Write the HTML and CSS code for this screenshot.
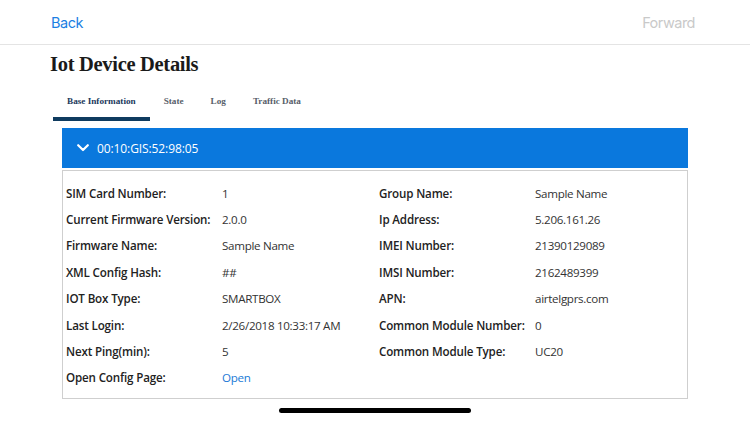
FILE: index.html
```html
<!DOCTYPE html>
<html>
<head>
<meta charset="utf-8">
<link rel="stylesheet" href="styles.css">
</head>
<body>
<div class="nav">
  <span class="back">Back</span>
  <span class="forward">Forward</span>
</div>
<h1 class="title">Iot Device Details</h1>
<div class="tabs">
  <div class="tab active">Base Information</div>
  <div class="tab">State</div>
  <div class="tab">Log</div>
  <div class="tab">Traffic Data</div>
</div>
<div class="panel">
  <div class="panel-head">
    <svg class="chev" width="12" height="8" viewBox="0 0 12 8"><path d="M1.2 1.2 L6 6 L10.8 1.2" fill="none" stroke="#fff" stroke-width="2.2" stroke-linecap="round" stroke-linejoin="round"/></svg>
    <span>00:10:GIS:52:98:05</span>
  </div>
  <div class="panel-body">
    <div class="lbl">SIM Card Number:</div><div class="val">1</div>
    <div class="lbl">Group Name:</div><div class="val">Sample Name</div>
    <div class="lbl">Current Firmware Version:</div><div class="val">2.0.0</div>
    <div class="lbl">Ip Address:</div><div class="val">5.206.161.26</div>
    <div class="lbl">Firmware Name:</div><div class="val">Sample Name</div>
    <div class="lbl">IMEI Number:</div><div class="val">21390129089</div>
    <div class="lbl">XML Config Hash:</div><div class="val">##</div>
    <div class="lbl">IMSI Number:</div><div class="val">2162489399</div>
    <div class="lbl">IOT Box Type:</div><div class="val">SMARTBOX</div>
    <div class="lbl">APN:</div><div class="val">airtelgprs.com</div>
    <div class="lbl">Last Login:</div><div class="val">2/26/2018 10:33:17 AM</div>
    <div class="lbl">Common Module Number:</div><div class="val">0</div>
    <div class="lbl">Next Ping(min):</div><div class="val">5</div>
    <div class="lbl">Common Module Type:</div><div class="val">UC20</div>
    <div class="lbl">Open Config Page:</div><div class="val link">Open</div>
    <div class="lbl"></div><div class="val"></div>
  </div>
</div>
<div class="home-bar"></div>
</body>
</html>
```
FILE: styles.css
```css
html, body {
  margin: 0;
  padding: 0;
  background: #fff;
  width: 750px;
  height: 422px;
  overflow: hidden;
  position: relative;
}
.nav {
  height: 44px;
  border-bottom: 1px solid #e4e4e4;
  display: flex;
  justify-content: space-between;
  align-items: center;
  padding: 0 55px 0 51px;
  font-family: Inter, "Liberation Sans", sans-serif;
  font-size: 14.5px;
  letter-spacing: -0.5px;
}
.back { color: #1b7fe3; }
.forward { color: #c9c9c9; }
.title {
  margin: 5px 0 0 50px;
  font-family: "Liberation Serif", serif;
  font-weight: bold;
  font-size: 20.5px;
  letter-spacing: -0.3px;
  line-height: 28px;
  color: #1a1a1a;
}
.tabs {
  display: flex;
  margin: 10px 0 0 53px;
  font-family: "Liberation Serif", serif;
  font-weight: bold;
  font-size: 9.2px;
}
.tab {
  padding: 8px 13px 11px 14px;
  color: #58606a;
  border-bottom: 4px solid transparent;
}
.tab.active {
  padding-right: 14px;
  color: #1c3a5c;
  border-bottom-color: #0f3b5f;
}
.panel {
  margin: 7px 0 0 62px;
  width: 626px;
  font-family: "Open Sans", sans-serif;
}
.panel-head {
  height: 40px;
  background: #0a78dd;
  display: flex;
  align-items: center;
  gap: 8px;
  padding-left: 15px;
  color: #fff;
  font-size: 12px;
  letter-spacing: -0.1px;
}
.panel-body {
  margin-top: 2px;
  border: 1px solid #cfcfcf;
  display: grid;
  grid-template-columns: 156px 157px 156px 1fr;
  grid-auto-rows: 26.4px;
  align-items: center;
  padding: 9px 0 7px 3px;
  font-size: 11.6px;
  letter-spacing: -0.15px;
  color: #2b2b2b;
}
.lbl { font-weight: 600; color: #222; }
.val { color: #333; letter-spacing: -0.3px; }
.link { color: #1a7ad6; }
.home-bar {
  position: absolute;
  left: 279px;
  top: 408px;
  width: 192px;
  height: 5px;
  border-radius: 3px;
  background: #000;
}
```
